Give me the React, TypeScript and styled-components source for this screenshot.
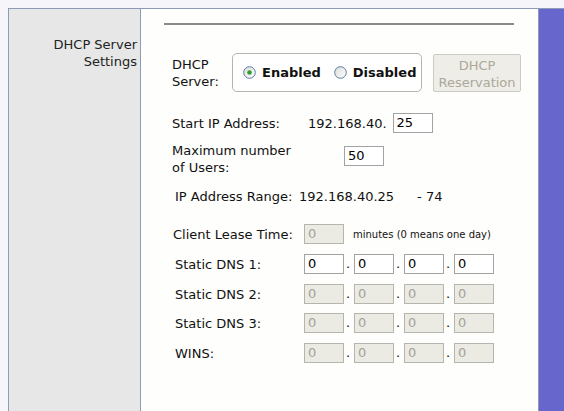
import React from "react";
import styled, { createGlobalStyle } from "styled-components";

const Global = createGlobalStyle`
  html, body { margin: 0; padding: 0; }
  body {
    background: #f6f6fa;
    font-family: "DejaVu Sans", Verdana, sans-serif;
    font-size: 13px;
    color: #111;
  }
  * { box-sizing: border-box; }
`;

const Page = styled.div`
  height: 100vh;
  padding: 8px 0 0 8px;
  display: flex;
`;

const Frame = styled.div`
  flex: 1;
  display: flex;
  border-top: 1px solid #8e9bb7;
  border-left: 1px solid #8e9bb7;
`;

const Sidebar = styled.div`
  width: 132px;
  flex-shrink: 0;
  background: #e7e7e7;
  border-right: 1px solid #8e9bb7;
  padding: 27px 3px 0 0;
  text-align: right;
  line-height: 17px;
  color: #222;
`;

const Content = styled.div`
  width: 398px;
  flex-shrink: 0;
  background: #fefefc;
  border-right: 1px solid #8e9bb7;
  padding: 14px 24px 0 23px;
`;

const Accent = styled.div`
  flex: 1;
  background: #6666cc;
`;

const Rule = styled.div`
  height: 2px;
  background: #8a8a8a;
`;

const Form = styled.div`
  display: flex;
  flex-direction: column;
  padding-left: 8px;
`;

const Row = styled.div<{ $mt: number; $align?: string }>`
  display: flex;
  align-items: ${(p) => p.$align || "center"};
  margin-top: ${(p) => p.$mt}px;
  white-space: nowrap;
`;

const Label = styled.div<{ $w: number; $indent?: number }>`
  width: ${(p) => p.$w}px;
  padding-left: ${(p) => p.$indent || 0}px;
  line-height: 17px;
  flex-shrink: 0;
`;

const RadioBox = styled.div`
  width: 190px;
  height: 39px;
  flex-shrink: 0;
  border: 1px solid #b4b4b4;
  border-radius: 5px;
  background: #fff;
  display: flex;
  align-items: center;
  padding-left: 10px;
`;

const RadioItem = styled.label<{ $ml?: number }>`
  display: flex;
  align-items: center;
  gap: 6px;
  margin-left: ${(p) => p.$ml || 0}px;
  font-weight: bold;
`;

const ReserveButton = styled.div`
  width: 88px;
  height: 38px;
  flex-shrink: 0;
  margin-left: 11px;
  margin-top: 1px;
  background: #eeede8;
  border: 1px solid #cbcac3;
  border-radius: 2px;
  color: #aca899;
  text-align: center;
  line-height: 17px;
  padding-top: 2px;
`;

const Box = styled.div<{ $disabled?: boolean; $ml?: number; $mt?: number }>`
  width: 40px;
  height: 20px;
  border: 1px solid ${(p) => (p.$disabled ? "#b5b5ad" : "#a3a3a3")};
  background: ${(p) => (p.$disabled ? "#ebebe4" : "#fff")};
  color: ${(p) => (p.$disabled ? "#a2a29a" : "#000")};
  padding-left: 3px;
  line-height: 18px;
  margin-left: ${(p) => p.$ml || 0}px;
  margin-top: ${(p) => p.$mt || 0}px;
  flex-shrink: 0;
`;

const Dot = styled.span`
  width: 10px;
  padding-left: 2px;
  line-height: 20px;
`;

const Value = styled.span<{ $ml?: number }>`
  margin-left: ${(p) => p.$ml || 0}px;
  line-height: 17px;
`;

const Note = styled.span`
  font-size: 10px;
  margin-left: 9px;
`;

const Radio = ({ checked }: { checked?: boolean }) => (
  <svg width="13" height="13" viewBox="0 0 13 13">
    <defs>
      <linearGradient id={checked ? "rg1" : "rg0"} x1="0" y1="0" x2="1" y2="1">
        <stop offset="0" stopColor="#dcdcd6" />
        <stop offset="1" stopColor="#ffffff" />
      </linearGradient>
    </defs>
    <circle cx="6.5" cy="6.5" r="5.8" fill={`url(#${checked ? "rg1" : "rg0"})`} stroke="#5a7ba0" strokeWidth="1" />
    {checked && <circle cx="6.5" cy="6.5" r="2.3" fill="#2fa02f" />}
  </svg>
);

const IpFields = ({ disabled }: { disabled?: boolean }) => (
  <>
    <Box $disabled={disabled}>0</Box>
    <Dot>.</Dot>
    <Box $disabled={disabled}>0</Box>
    <Dot>.</Dot>
    <Box $disabled={disabled}>0</Box>
    <Dot>.</Dot>
    <Box $disabled={disabled}>0</Box>
  </>
);

export default function App() {
  return (
    <>
      <Global />
      <Page>
        <Frame>
          <Sidebar>
            DHCP Server
            <br />
            Settings
          </Sidebar>
          <Content>
            <Rule />
            <Form>
              <Row $mt={28}>
                <Label $w={60}>
                  DHCP
                  <br />
                  Server:
                </Label>
                <RadioBox>
                  <RadioItem>
                    <Radio checked />
                    Enabled
                  </RadioItem>
                  <RadioItem $ml={13}>
                    <Radio />
                    Disabled
                  </RadioItem>
                </RadioBox>
                <ReserveButton>
                  DHCP
                  <br />
                  Reservation
                </ReserveButton>
              </Row>
              <Row $mt={21}>
                <Label $w={136}>Start IP Address:</Label>
                <Value>192.168.40.</Value>
                <Box $ml={6}>25</Box>
              </Row>
              <Row $mt={9} $align="flex-start">
                <Label $w={172}>
                  Maximum number
                  <br />
                  of Users:
                </Label>
                <Box $mt={4}>50</Box>
              </Row>
              <Row $mt={12}>
                <Label $w={127} $indent={3}>IP Address Range:</Label>
                <Value>192.168.40.25</Value>
                <Value $ml={23}>- 74</Value>
              </Row>
              <Row $mt={19}>
                <Label $w={132} $indent={1}>Client Lease Time:</Label>
                <Box $disabled>0</Box>
                <Note>minutes (0 means one day)</Note>
              </Row>
              <Row $mt={10}>
                <Label $w={132} $indent={3}>Static DNS 1:</Label>
                <IpFields />
              </Row>
              <Row $mt={10}>
                <Label $w={132} $indent={3}>Static DNS 2:</Label>
                <IpFields disabled />
              </Row>
              <Row $mt={9}>
                <Label $w={132} $indent={3}>Static DNS 3:</Label>
                <IpFields disabled />
              </Row>
              <Row $mt={10}>
                <Label $w={132} $indent={3}>WINS:</Label>
                <IpFields disabled />
              </Row>
            </Form>
          </Content>
          <Accent />
        </Frame>
      </Page>
    </>
  );
}
